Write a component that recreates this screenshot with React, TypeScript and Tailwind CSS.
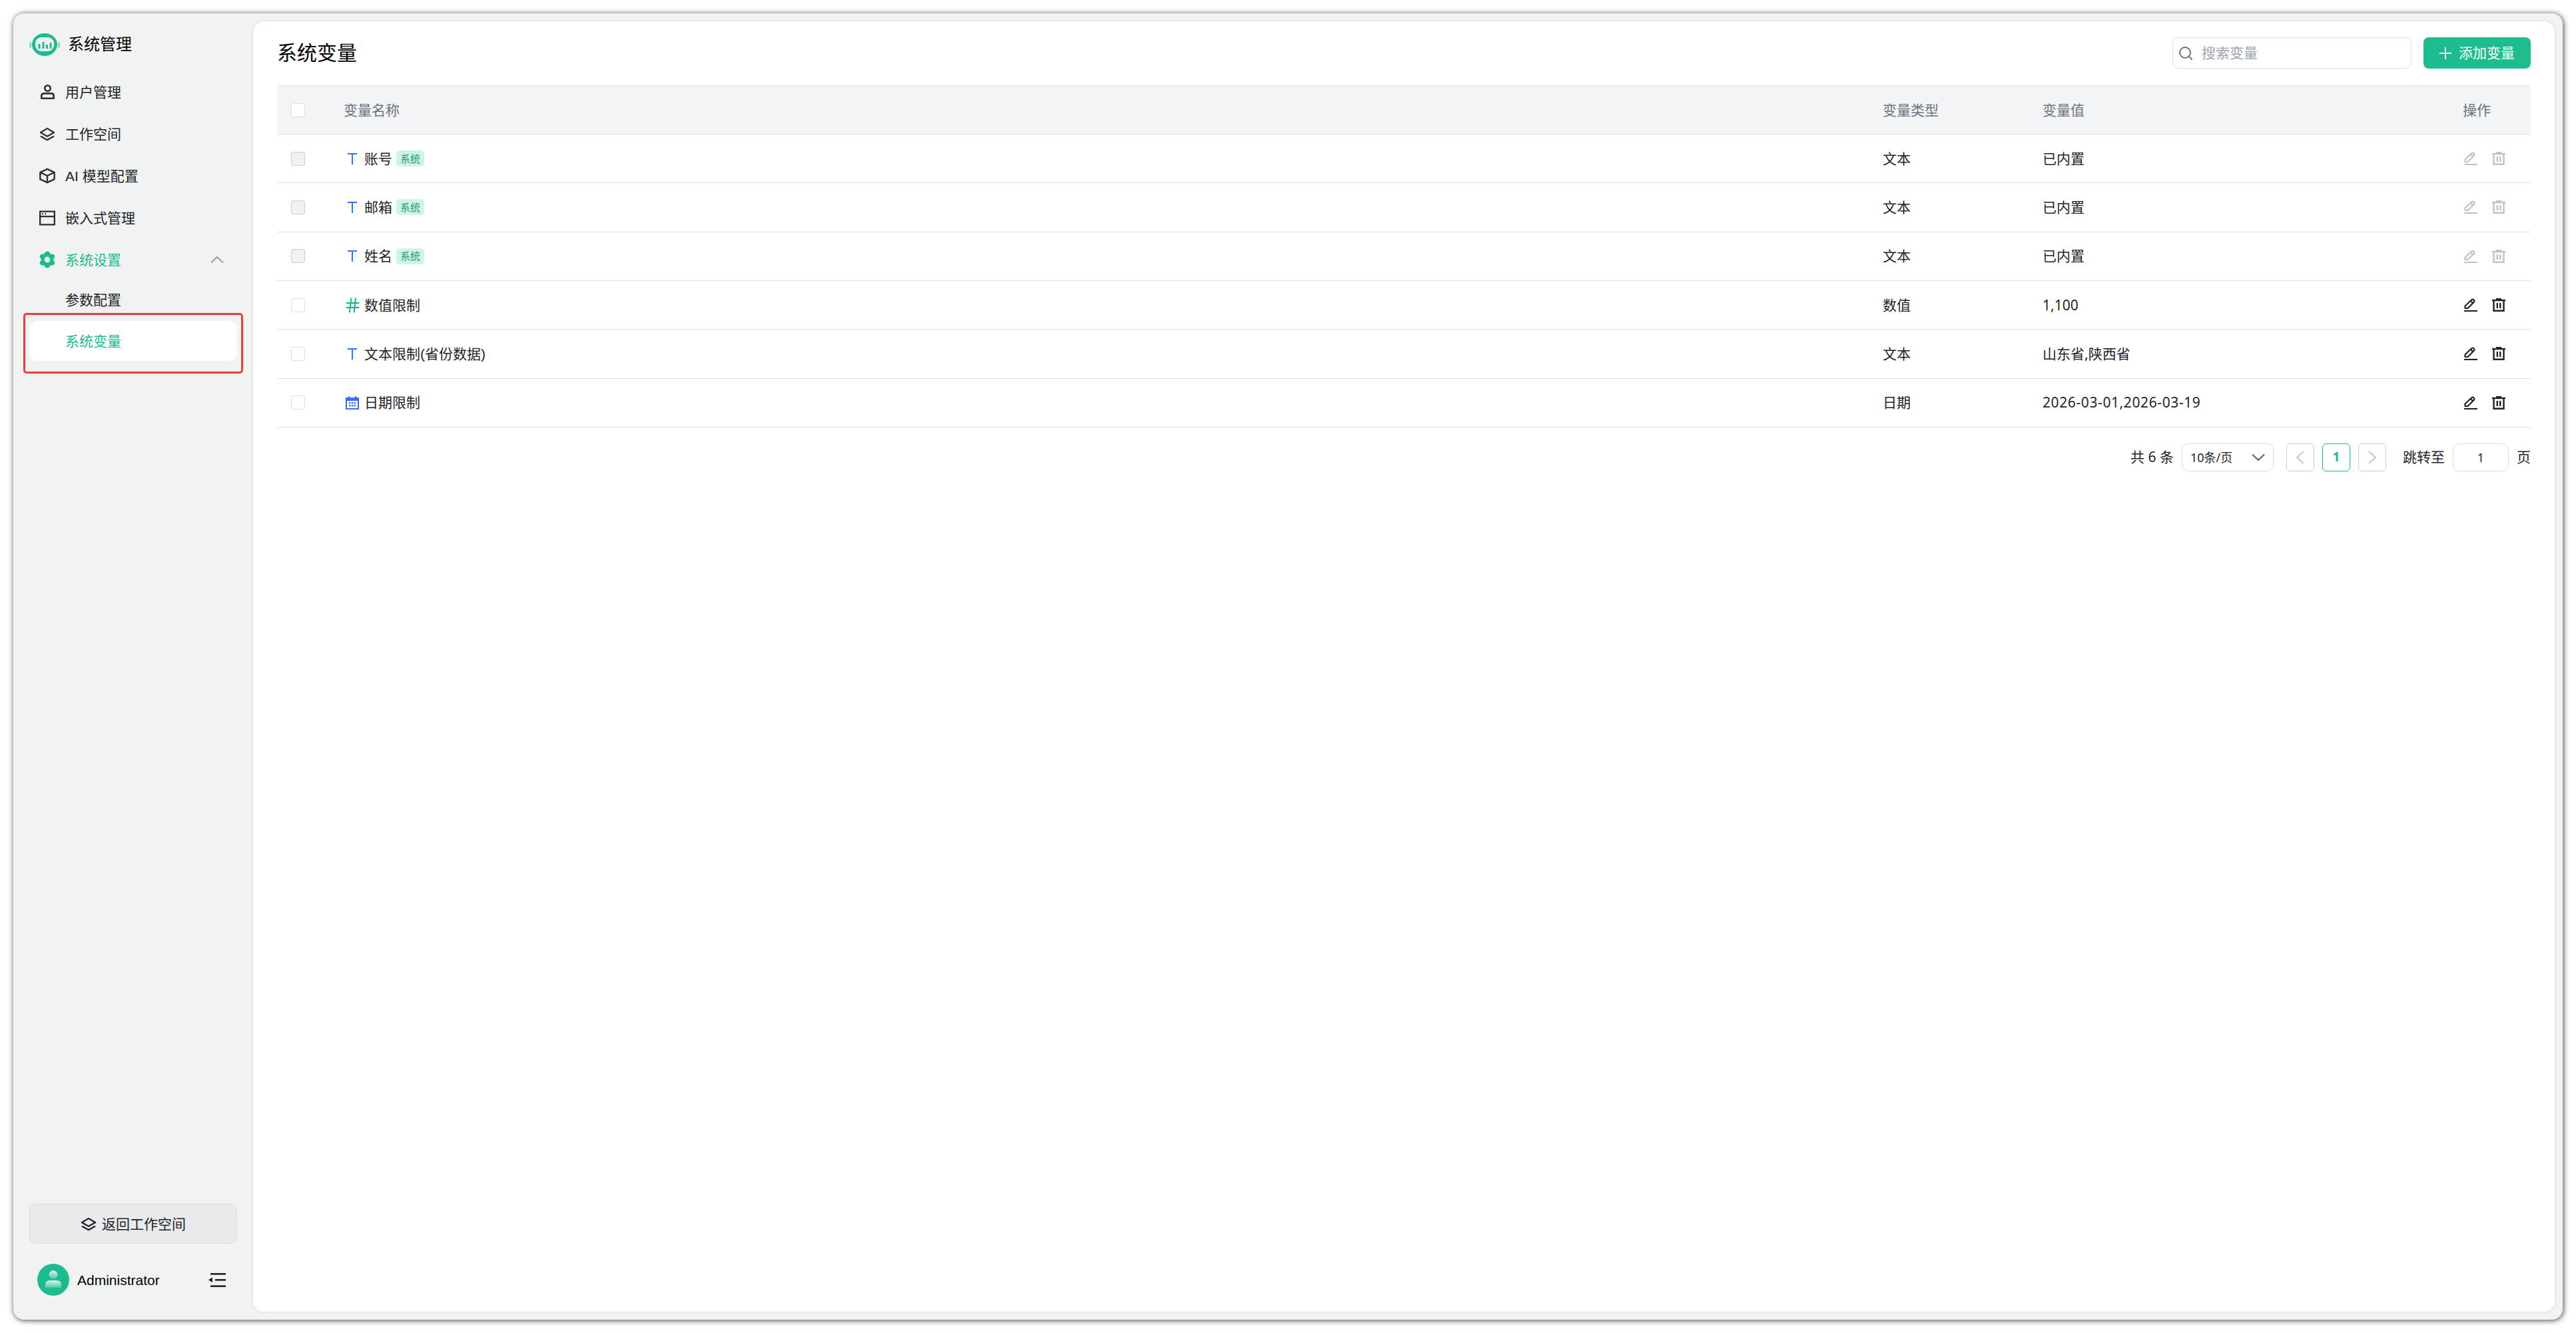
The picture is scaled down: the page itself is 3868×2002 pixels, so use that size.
import React from 'react';
import { Hash, Search } from 'lucide-react';

const Layers = ({ className }: { className: string }) => (
    <svg viewBox="0 0 25 21" fill="none" stroke="currentColor" strokeWidth="2.4" className={className}>
        <path d="M12.5 1.5 L23 8 L12.5 14 L2 8 Z" strokeLinejoin="round" />
        <path d="M2 13.5 L12.5 19.5 L23 13.5" strokeLinejoin="round" />
    </svg>
);

const UserIcon = () => (
    <svg viewBox="0 0 21 22" fill="none" stroke="currentColor" strokeWidth="2.6" className="w-[21px] h-[22px]">
        <circle cx="10.5" cy="5.5" r="4.2" />
        <path d="M1.3 20.7 V17 Q1.3 13.4 5 13.4 H16 Q19.7 13.4 19.7 17 V20.7 Z" strokeLinejoin="round" />
    </svg>
);

const BoxIcon = () => (
    <svg viewBox="0 0 25 24" fill="none" stroke="currentColor" strokeWidth="2.5" strokeLinejoin="round" className="w-[25px] h-[24px]">
        <path d="M12.5 1.4 L23.6 6.7 V17.3 L12.5 22.6 L1.4 17.3 V6.7 Z" />
        <path d="M1.4 6.7 L12.5 12 L23.6 6.7 M12.5 12 V22.6" />
    </svg>
);

const WindowIcon = () => (
    <svg viewBox="0 0 25 23" fill="none" stroke="currentColor" strokeWidth="2.4" className="w-[25px] h-[23px]">
        <rect x="1.2" y="1.2" width="22.6" height="20.6" />
        <path d="M1 9 H24" />
        <circle cx="5" cy="5" r="1.2" fill="currentColor" stroke="none" />
        <circle cx="9.5" cy="5" r="1.2" fill="currentColor" stroke="none" />
    </svg>
);

const GearIcon = () => (
    <svg viewBox="0 0 24 26" className="w-[24px] h-[26px]" fill="#1cbc8f">
        <path fillRule="evenodd" d="M9 1.5 Q12 -0.3 15 1.5 Q15.8 4.3 18.5 4.8 Q21 4 23 6.8 Q23.8 10 21.8 11 Q20.8 13 21.8 15 Q23.8 16.2 23 19.2 Q21 22 18.5 21.2 Q15.8 21.7 15 24.5 Q12 26.3 9 24.5 Q8.2 21.7 5.5 21.2 Q3 22 1 19.2 Q0.2 16.2 2.2 15 Q3.2 13 2.2 11 Q0.2 10 1 6.8 Q3 4 5.5 4.8 Q8.2 4.3 9 1.5 Z M12 8.6 A4.4 4.4 0 1 0 12 17.4 A4.4 4.4 0 1 0 12 8.6 Z" />
    </svg>
);

const Logo = () => (
    <svg viewBox="0 0 46 34" className="w-[46px] h-[34px]">
        <rect x="0" y="13" width="3" height="9" rx="1.5" fill="#8fdcc5" />
        <rect x="43" y="13" width="3" height="9" rx="1.5" fill="#8fdcc5" />
        <ellipse cx="23" cy="17" rx="19" ry="17" fill="#1cbc8f" />
        <rect x="9" y="6" width="28" height="21" rx="9" fill="#eef3f1" />
        <rect x="13.5" y="16" width="3" height="7" fill="#1cbc8f" />
        <rect x="19.5" y="13" width="3" height="10" fill="#1cbc8f" />
        <rect x="25" y="17" width="3" height="6" fill="#1cbc8f" />
        <rect x="30.5" y="14" width="3" height="9" fill="#1cbc8f" />
    </svg>
);

const TIcon = () => (
    <svg viewBox="0 0 14 17" className="w-[14px] h-[17px]" fill="#3370ff">
        <path d="M0 0 H14 V2 H8 V17 H6 V2 H0 Z" />
    </svg>
);

const CalendarIcon = () => (
    <svg viewBox="0 0 20 20" className="w-[20px] h-[20px]" fill="#3370ff">
        <path fillRule="evenodd" d="M0 2 H4 V0 H6 V2 H14 V0 H16 V2 H20 V20 H0 Z M2 7 V18 H18 V7 Z" />
        <rect x="5" y="9" width="2.4" height="2.4" />
        <rect x="8.8" y="9" width="2.4" height="2.4" />
        <rect x="12.6" y="9" width="2.4" height="2.4" />
        <rect x="5" y="13" width="2.4" height="2.4" />
        <rect x="8.8" y="13" width="2.4" height="2.4" />
        <rect x="12.6" y="13" width="2.4" height="2.4" />
    </svg>
);

const EditIcon = () => (
    <svg viewBox="0 0 20 20" className="w-[20px] h-[20px]" fill="none" stroke="currentColor" strokeWidth="2.2">
        <path d="M1.5 15 V11.5 L11.5 2 L13.5 1.5 L15.5 4 L15 5.5 L5.5 15 Z" strokeLinejoin="round" />
        <path d="M10 4 L13 7" />
        <path d="M0 19 H20" />
    </svg>
);

const TrashIcon = () => (
    <svg viewBox="0 0 20 20" className="w-[20px] h-[20px]" fill="none" stroke="currentColor" strokeWidth="2.4">
        <path d="M0 3 H20" />
        <path d="M6 1 H14" />
        <path d="M2.5 3 V18.8 H17.5 V3" />
        <path d="M7.8 7 V15 M12.2 7 V15" />
    </svg>
);

const CollapseIcon = () => (
    <svg viewBox="0 0 26 21" className="w-[26px] h-[21px]" fill="#1f2329">
        <rect x="3" y="0" width="23" height="2.6" />
        <rect x="10" y="9" width="16" height="2.6" />
        <rect x="3" y="18.4" width="23" height="2.6" />
        <path d="M0 10.3 L6 6.5 V14 Z" />
    </svg>
);

const PlusIcon = () => (
    <svg viewBox="0 0 18 18" className="w-[18px] h-[18px]" fill="none" stroke="currentColor" strokeWidth="2">
        <path d="M9 0 V18 M0 9 H18" />
    </svg>
);

// 20 x 10 chevrons, same stroke as the pager arrows
const ChevronWide = ({ up, className }: { up?: boolean; className: string }) => (
    <svg viewBox="0 0 20 10" className={`w-[20px] h-[10px] ${className}`} fill="none" stroke="currentColor" strokeWidth="2.2">
        <path d={up ? 'M1 9.5 L10 1 L19 9.5' : 'M1 0.5 L10 9 L19 0.5'} />
    </svg>
);

const ChevronTall = ({ right }: { right?: boolean }) => (
    <svg viewBox="0 0 12 20" className="w-[12px] h-[20px]" fill="none" stroke="currentColor" strokeWidth="2.2">
        <path d={right ? 'M1 1 L11 10 L1 19' : 'M11 1 L1 10 L11 19'} />
    </svg>
);

const AvatarIcon = () => (
    <div className="w-12 h-12 rounded-full bg-[#1cbc8f] flex items-center justify-center">
        <svg viewBox="0 0 48 48" className="w-12 h-12">
            <defs>
                <linearGradient id="avatarFade" x1="0" y1="0" x2="0" y2="1">
                    <stop offset="0" stopColor="#ffffff" stopOpacity="0.85" />
                    <stop offset="1" stopColor="#ffffff" stopOpacity="0.2" />
                </linearGradient>
            </defs>
            <circle cx="24" cy="16.5" r="6.5" fill="url(#avatarFade)" />
            <path d="M12 36 V32 Q12 25 19 25 H29 Q36 25 36 32 V36 Z" fill="url(#avatarFade)" />
        </svg>
    </div>
);

const Checkbox = ({ disabled }: { disabled?: boolean }) => (
    <div className={`w-[21px] h-[21px] rounded-[3px] border-[1.5px] ${disabled ? 'bg-[#eff0f1] border-[#c9cdd2]' : 'bg-white border-[#dcdfe2]'}`} />
);

const NavItem = ({ icon, label }: { icon: React.ReactNode; label: string }) => (
    <div className="h-[60px] flex items-center text-[#1f2329]">
        <div className="w-[54px] pl-[15px] flex justify-center pr-[15px] text-[#2b2f36]">{icon}</div>
        <span>{label}</span>
    </div>
);

const rows = [
    { name: '账号', sys: true, type: '文本', value: '已内置', kind: 'text' },
    { name: '邮箱', sys: true, type: '文本', value: '已内置', kind: 'text' },
    { name: '姓名', sys: true, type: '文本', value: '已内置', kind: 'text' },
    { name: '数值限制', sys: false, type: '数值', value: '1,100', kind: 'num' },
    { name: '文本限制(省份数据)', sys: false, type: '文本', value: '山东省,陕西省', kind: 'text' },
    { name: '日期限制', sys: false, type: '日期', value: '2026-03-01,2026-03-19', kind: 'date' },
];

const App = () => {
    return (
        <div className="h-screen bg-white p-5 text-[21px] leading-none text-[#1f2329] font-['Liberation_Sans','Noto_Sans_CJK_SC',sans-serif]">
            <div className="h-full flex rounded-[16px] bg-[#f1f3f3] shadow-[1px_1px_8px_rgba(0,0,0,0.75)]">
                <aside className="w-[360px] shrink-0 flex flex-col pl-6 pr-6">
                    <div className="flex items-center h-[34px] mt-[30px] gap-3">
                        <Logo />
                        <span className="text-[24px] text-black">系统管理</span>
                    </div>
                    <nav className="mt-[24px] flex flex-col gap-[3px]">
                        <NavItem icon={<UserIcon />} label="用户管理" />
                        <NavItem icon={<Layers className="w-[25px] h-[21px]" />} label="工作空间" />
                        <NavItem icon={<BoxIcon />} label="AI 模型配置" />
                        <NavItem icon={<WindowIcon />} label="嵌入式管理" />
                        <div className="flex flex-col">
                            <div className="h-[60px] flex items-center text-[#1cbc8f]">
                                <div className="w-[54px] pl-[15px] flex justify-center pr-[15px]"><GearIcon /></div>
                                <span className="flex-1">系统设置</span>
                                <ChevronWide up className="text-[#9aa0a8] mr-5" />
                            </div>
                            <div className="h-[60px] flex items-center pl-[54px] text-[#1f2329]">参数配置</div>
                            <div className="relative mt-[2px] h-[60px] flex items-center pl-[54px] bg-white rounded-[12px] text-[#1cbc8f]">
                                系统变量
                                <div className="absolute -left-[9px] -right-[9px] -top-3 -bottom-[19px] border-[3.5px] border-[#ef3b3b] rounded-[5px]" />
                            </div>
                        </div>
                    </nav>
                    <div className="mt-auto h-[60px] flex items-center justify-center gap-2 rounded-[10px] border border-[#d9dcdf] bg-[#e8eaec] text-[#1f2329]">
                        <Layers className="w-[24px] h-[21px]" />
                        <span>返回工作空间</span>
                    </div>
                    <div className="flex items-center mt-[30px] mb-[36px] pl-3 pr-[17px]">
                        <AvatarIcon />
                        <span className="ml-3 flex-1 text-black">Administrator</span>
                        <CollapseIcon />
                    </div>
                </aside>

                <main className="flex-1 my-3 mr-3 bg-white rounded-[16px] shadow-[0_0_4px_rgba(0,0,0,0.12)] px-9 pt-6">
                    <div className="flex items-center h-[47px]">
                        <h1 className="flex-1 text-[30px] text-black">系统变量</h1>
                        <div className="w-[359px] h-[47px] flex items-center rounded-[8px] border-[1.5px] border-[#dcdfe2] pl-[7px] text-[#9ca3af]">
                            <Search size={24} strokeWidth={2} className="text-[#6b7280]" />
                            <span className="ml-3">搜索变量</span>
                        </div>
                        <div className="ml-[18px] w-[161px] h-[47px] flex items-center justify-center gap-[11px] rounded-[8px] bg-[#1cbc8f] text-white">
                            <PlusIcon />
                            <span>添加变量</span>
                        </div>
                    </div>

                    <div className="mt-[25px]">
                        <div className="h-[74px] flex items-center bg-[#f3f4f6] border-y border-[#dee0e3] text-[#6b7280]">
                            <div className="w-[100px] pl-[21px]"><div className="w-[21px] h-[21px] rounded-[3px] border-[1.5px] bg-white border-[#dcdfe2]" /></div>
                            <div className="flex-1">变量名称</div>
                            <div className="w-[240px]">变量类型</div>
                            <div className="w-[631px]">变量值</div>
                            <div className="w-[102px]">操作</div>
                        </div>
                        {rows.map((row) => (
                            <div key={row.name} className="h-[73.33px] flex items-center border-b border-[#dee0e3]">
                                <div className="w-[100px] pl-[21px]"><Checkbox disabled={row.sys} /></div>
                                <div className="flex-1 flex items-center">
                                    <div className="w-[33px] flex justify-center pr-[3px] -ml-[2px]">
                                        {row.kind === 'text' && <TIcon />}
                                        {row.kind === 'num' && <Hash size={27} strokeWidth={1.9} className="shrink-0 text-[#1cb89a]" />}
                                        {row.kind === 'date' && <CalendarIcon />}
                                    </div>
                                    <span>{row.name}</span>
                                    {row.sys && (
                                        <span className="ml-[6px] h-6 w-[42px] flex items-center justify-center rounded-[5px] bg-[#d1f2e8] text-[15px] text-[#1a9e7a]">系统</span>
                                    )}
                                </div>
                                <div className="w-[240px]">{row.type}</div>
                                <div className={`w-[631px] font-['Noto_Sans','Noto_Sans_CJK_SC',sans-serif] ${row.kind === 'date' ? 'tracking-[0.6px]' : ''}`}>{row.value}</div>
                                <div className={`w-[102px] flex items-center gap-[22px] pl-[2px] ${row.sys ? 'text-[#bfc3c8]' : 'text-[#1f2329]'}`}>
                                    <EditIcon />
                                    <TrashIcon />
                                </div>
                            </div>
                        ))}
                        <div className="flex items-center justify-end mt-[24px] h-[42px] font-['Noto_Sans','Noto_Sans_CJK_SC',sans-serif]">
                            <span>共 6 条</span>
                            <div className="ml-3 w-[138px] h-[42px] flex items-center justify-between rounded-[10px] border-[1.5px] border-[#dcdfe2] pl-3 pr-3 text-[18px]">
                                <span>10条/页</span>
                                <ChevronWide className="text-[#5f6670]" />
                            </div>
                            <div className="ml-[19px] w-[42px] h-[42px] flex items-center justify-center rounded-[6px] border-[1.5px] border-[#c9cdd2] text-[#c4c8cd]">
                                <ChevronTall />
                            </div>
                            <div className="ml-3 w-[42px] h-[42px] flex items-center justify-center rounded-[6px] border-[1.5px] border-[#1cbc8f] text-[#1cbc8f] font-bold text-[19px]">1</div>
                            <div className="ml-3 w-[42px] h-[42px] flex items-center justify-center rounded-[6px] border-[1.5px] border-[#c9cdd2] text-[#c4c8cd]">
                                <ChevronTall right />
                            </div>
                            <span className="ml-[25px]">跳转至</span>
                            <div className="ml-3 w-[84px] h-[42px] flex items-center justify-center rounded-[10px] border-[1.5px] border-[#dcdfe2] text-[18px]">1</div>
                            <span className="ml-3">页</span>
                        </div>
                    </div>
                </main>
            </div>
        </div>
    );
};

export default App;
